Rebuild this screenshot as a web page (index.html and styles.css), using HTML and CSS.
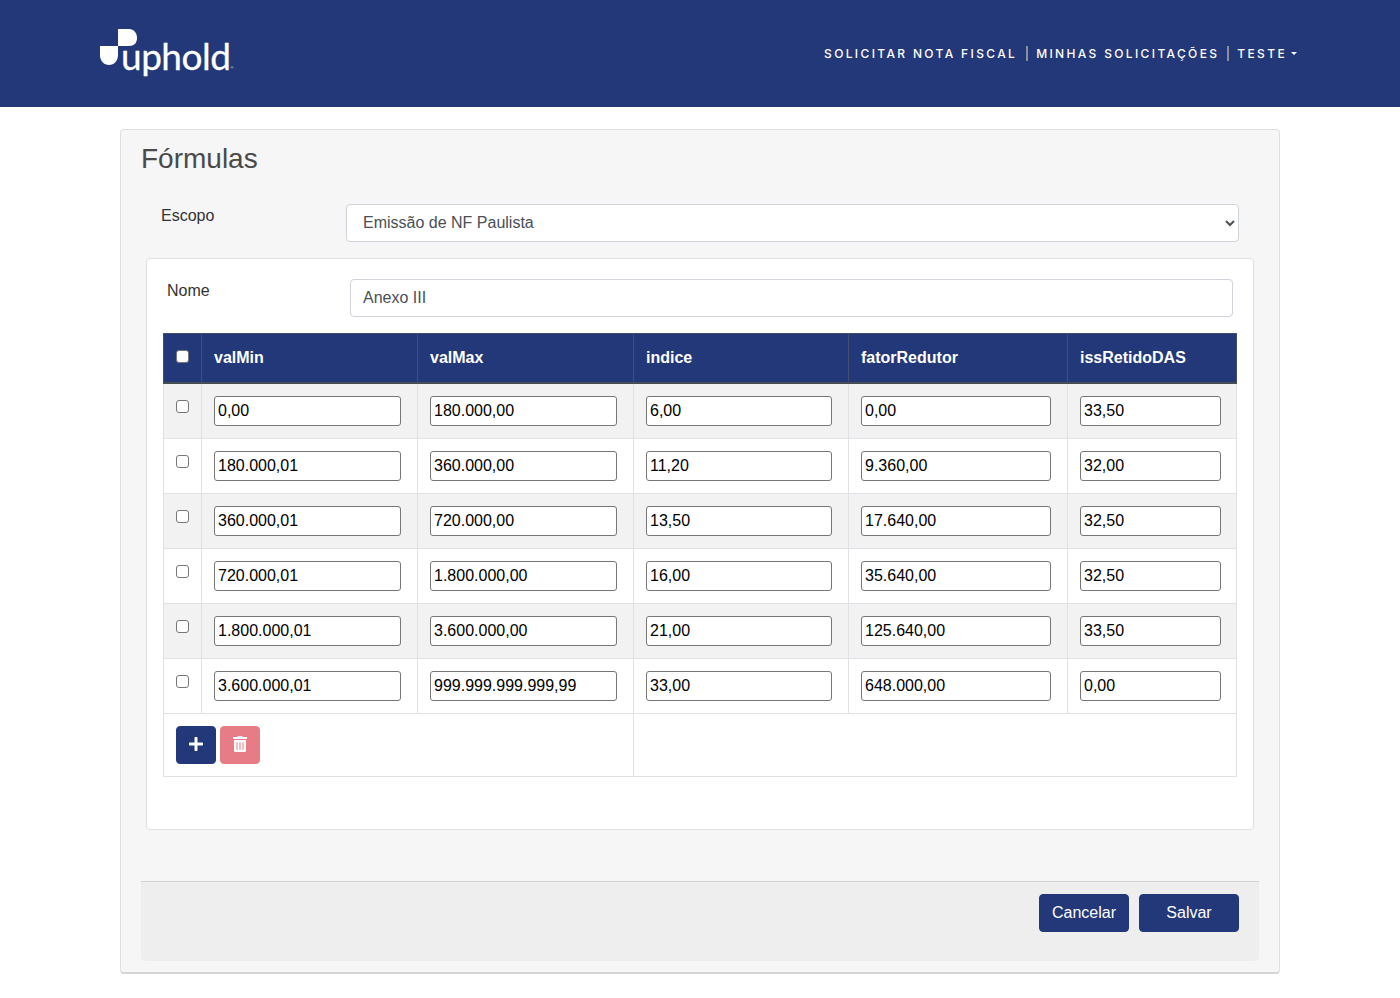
FILE: index.html
```html
<!DOCTYPE html>
<html lang="pt-BR">
<head>
    <meta charset="UTF-8">
    <meta name="viewport" content="width=device-width, initial-scale=1.0">
    <title>Fórmulas</title>
    <link rel="stylesheet" href="styles.css">
</head>
<body>
    <header class="topbar">
        <a class="logo" href="#">
            <svg class="logo-mark" viewBox="0 0 38 37" width="38" height="37">
                <path d="M18 0H29C34 0 37 4 37 9C37 14 34 17 29 17H18Z" fill="#fff"/>
                <path d="M0 17H18V26C18 32 14 36 9 36C4 36 0 32 0 26Z" fill="#fff"/>
            </svg>
            <span class="logo-text">uphold</span><span class="logo-reg">®</span>
        </a>
        <nav class="topnav">
            <a href="#">Solicitar Nota Fiscal</a>
            <span class="sep"></span>
            <a href="#">Minhas Solicitações</a>
            <span class="sep"></span>
            <a href="#" class="dropdown">Teste</a>
        </nav>
    </header>

    <main class="card">
        <h1>Fórmulas</h1>
        <div class="form-row scope-row">
            <label for="escopo">Escopo</label>
            <select id="escopo" class="form-control">
                <option>Emissão de NF Paulista</option>
            </select>
        </div>

        <section class="inner-card">
            <div class="form-row name-row">
                <label for="nome">Nome</label>
                <input id="nome" class="form-control" type="text" value="Anexo III">
            </div>

            <table class="grid">
                <colgroup>
                    <col class="col-check">
                    <col class="col-min">
                    <col class="col-max">
                    <col class="col-indice">
                    <col class="col-fator">
                    <col class="col-iss">
                </colgroup>
                <thead>
                    <tr>
                        <th><input type="checkbox" class="check"></th>
                        <th>valMin</th>
                        <th>valMax</th>
                        <th>indice</th>
                        <th>fatorRedutor</th>
                        <th>issRetidoDAS</th>
                    </tr>
                </thead>
                <tbody>
                    <tr>
                        <td><input type="checkbox" class="check"></td>
                        <td><input type="text" value="0,00"></td>
                        <td><input type="text" value="180.000,00"></td>
                        <td><input type="text" value="6,00"></td>
                        <td><input type="text" value="0,00"></td>
                        <td><input type="text" value="33,50"></td>
                    </tr>
                    <tr>
                        <td><input type="checkbox" class="check"></td>
                        <td><input type="text" value="180.000,01"></td>
                        <td><input type="text" value="360.000,00"></td>
                        <td><input type="text" value="11,20"></td>
                        <td><input type="text" value="9.360,00"></td>
                        <td><input type="text" value="32,00"></td>
                    </tr>
                    <tr>
                        <td><input type="checkbox" class="check"></td>
                        <td><input type="text" value="360.000,01"></td>
                        <td><input type="text" value="720.000,00"></td>
                        <td><input type="text" value="13,50"></td>
                        <td><input type="text" value="17.640,00"></td>
                        <td><input type="text" value="32,50"></td>
                    </tr>
                    <tr>
                        <td><input type="checkbox" class="check"></td>
                        <td><input type="text" value="720.000,01"></td>
                        <td><input type="text" value="1.800.000,00"></td>
                        <td><input type="text" value="16,00"></td>
                        <td><input type="text" value="35.640,00"></td>
                        <td><input type="text" value="32,50"></td>
                    </tr>
                    <tr>
                        <td><input type="checkbox" class="check"></td>
                        <td><input type="text" value="1.800.000,01"></td>
                        <td><input type="text" value="3.600.000,00"></td>
                        <td><input type="text" value="21,00"></td>
                        <td><input type="text" value="125.640,00"></td>
                        <td><input type="text" value="33,50"></td>
                    </tr>
                    <tr>
                        <td><input type="checkbox" class="check"></td>
                        <td><input type="text" value="3.600.000,01"></td>
                        <td><input type="text" value="999.999.999.999,99"></td>
                        <td><input type="text" value="33,00"></td>
                        <td><input type="text" value="648.000,00"></td>
                        <td><input type="text" value="0,00"></td>
                    </tr>
                </tbody>
                <tfoot>
                    <tr>
                        <td colspan="3">
                            <div class="row-actions">
                                <button type="button" class="btn btn-icon" aria-label="Adicionar">
                                    <svg viewBox="0 0 448 512" width="14" height="16"><path fill="#fff" d="M416 208H272V64c0-17.67-14.33-32-32-32h-32c-17.67 0-32 14.33-32 32v144H32c-17.67 0-32 14.33-32 32v32c0 17.67 14.33 32 32 32h144v144c0 17.67 14.33 32 32 32h32c17.67 0 32-14.33 32-32V304h144c17.67 0 32-14.33 32-32v-32c0-17.67-14.33-32-32-32z"/></svg>
                                </button>
                                <button type="button" class="btn btn-icon btn-danger" aria-label="Excluir">
                                    <svg viewBox="0 0 448 512" width="14" height="16"><path fill="#fff" d="M32 464a48 48 0 0 0 48 48h288a48 48 0 0 0 48-48V128H32zm272-256a16 16 0 0 1 32 0v224a16 16 0 0 1-32 0zm-96 0a16 16 0 0 1 32 0v224a16 16 0 0 1-32 0zm-96 0a16 16 0 0 1 32 0v224a16 16 0 0 1-32 0zM432 32H312l-9.4-18.7A24 24 0 0 0 281.1 0H166.8a23.72 23.72 0 0 0-21.4 13.3L136 32H16A16 16 0 0 0 0 48v32a16 16 0 0 0 16 16h416a16 16 0 0 0 16-16V48a16 16 0 0 0-16-16z"/></svg>
                                </button>
                            </div>
                        </td>
                        <td colspan="3"></td>
                    </tr>
                </tfoot>
            </table>
        </section>

        <footer class="card-footer">
            <button type="button" class="btn btn-cancel">Cancelar</button>
            <button type="button" class="btn btn-save">Salvar</button>
        </footer>
    </main>
</body>
</html>
```

FILE: styles.css
```css
* {
    box-sizing: border-box;
}
body {
    font-family: "Liberation Sans", Arial, sans-serif;
    font-size: 16px;
    margin: 0;
    padding: 0;
    background-color: #fff;
    color: #333;
}
.topbar {
    height: 107px;
    background-color: #233879;
    padding: 29px 103px 0 100px;
    display: flex;
    justify-content: space-between;
    align-items: flex-start;
}
.logo {
    display: flex;
    align-items: flex-start;
    color: #fff;
    text-decoration: none;
}
.logo-mark {
    display: block;
}
.logo-text {
    font-family: Lato, sans-serif;
    font-size: 37px;
    line-height: 46px;
    margin: 4px 0 0 -17px;
    letter-spacing: -0.5px;
    -webkit-text-stroke: 0.3px #fff;
}
.logo-reg {
    font-size: 4px;
    margin-top: 36px;
    opacity: 0.8;
}
.topnav {
    display: flex;
    align-items: center;
    height: 48px;
    font-family: Inter, sans-serif;
    font-size: 12px;
    font-weight: 500;
    letter-spacing: 2.35px;
    text-transform: uppercase;
}
.topnav a {
    color: #fff;
    text-decoration: none;
}
.topnav a:first-child {
    margin-right: 1px;
}
.sep {
    width: 2px;
    height: 15px;
    background-color: #8a8f9e;
    margin: 0 8px;
}
.dropdown::after {
    content: "";
    display: inline-block;
    vertical-align: 3px;
    margin-left: 4px;
    border-top: 3px solid #fff;
    border-left: 3px solid transparent;
    border-right: 3px solid transparent;
}
.card {
    width: 1160px;
    height: 845px;
    margin: 22px auto 0;
    padding: 0 20px;
    background-color: #f6f6f6;
    border: 1px solid #dfdfdf;
    border-bottom: 2px solid #d4d4d4;
    border-radius: 4px;
}
h1 {
    margin: 0;
    padding-top: 12px;
    height: 74px;
    font-size: 28px;
    line-height: 33px;
    font-weight: 400;
    color: #4a4a4a;
}
.form-row {
    display: flex;
    align-items: flex-start;
}
.form-row label {
    line-height: 24px;
}
.scope-row {
    padding: 0 20px;
}
.scope-row label {
    width: 185px;
}
.name-row {
    padding: 0 4px;
}
.name-row label {
    width: 183px;
}
.form-control {
    flex: 1;
    height: 38px;
    padding: 6px 12px;
    font-family: inherit;
    font-size: 16px;
    color: #495057;
    background-color: #fff;
    border: 1px solid #ced4da;
    border-radius: 4px;
}
select.form-control {
    padding: 4px 12px 6px;
}
.inner-card {
    height: 572px;
    margin: 16px 5px 0;
    padding: 20px 16px 0;
    background-color: #fff;
    border: 1px solid #dfdfdf;
    border-radius: 4px;
}
.grid {
    width: 1073px;
    margin-top: 16px;
    border-collapse: collapse;
    table-layout: fixed;
}
.col-check { width: 38px; }
.col-min { width: 216px; }
.col-max { width: 216px; }
.col-indice { width: 215px; }
.col-fator { width: 219px; }
.col-iss { width: 169px; }
.grid th {
    height: 49px;
    padding: 0 12px;
    text-align: left;
    font-size: 16px;
    color: #fff;
    background-color: #233879;
    border: 1px solid #454d6e;
    border-bottom: 2px solid #454d55;
}
.grid td {
    height: 55px;
    padding: 12px 16px 12px 12px;
    vertical-align: top;
    border: 1px solid #dee2e6;
}
.grid tbody td:last-child {
    padding-right: 15px;
}
.grid tbody tr:nth-child(odd) td {
    background-color: #f2f2f2;
}
.grid input[type="text"] {
    display: block;
    width: 100%;
    height: 30px;
    padding: 1px 3px;
    font-family: inherit;
    font-size: 16px;
    color: #000;
    background-color: #fff;
    border: 1px solid #767676;
    border-radius: 3px;
}
.check {
    appearance: none;
    display: block;
    width: 13px;
    height: 13px;
    margin: 4px 0 0;
    background-color: #fff;
    border: 1px solid #767676;
    border-radius: 3px;
}
.grid th .check {
    margin: 0 0 3px;
}
.grid tfoot td {
    height: 63px;
}
.row-actions {
    display: flex;
    gap: 4px;
}
.btn {
    height: 38px;
    padding: 0;
    font-family: inherit;
    font-size: 16px;
    color: #fff;
    background-color: #233879;
    border: 1px solid #233879;
    border-radius: 4px;
}
.btn-icon {
    width: 40px;
    padding-bottom: 2px;
    display: flex;
    align-items: center;
    justify-content: center;
}
.btn-danger {
    background-color: #e87c86;
    border-color: #e87c86;
}
.btn-cancel {
    width: 90px;
}
.btn-save {
    width: 100px;
}
.card-footer {
    height: 80px;
    margin-top: 51px;
    padding: 12px 20px 0;
    display: flex;
    justify-content: flex-end;
    gap: 10px;
    background-color: #eee;
    border-top: 1px solid #d4d4d4;
    border-radius: 0 0 4px 4px;
}
```
